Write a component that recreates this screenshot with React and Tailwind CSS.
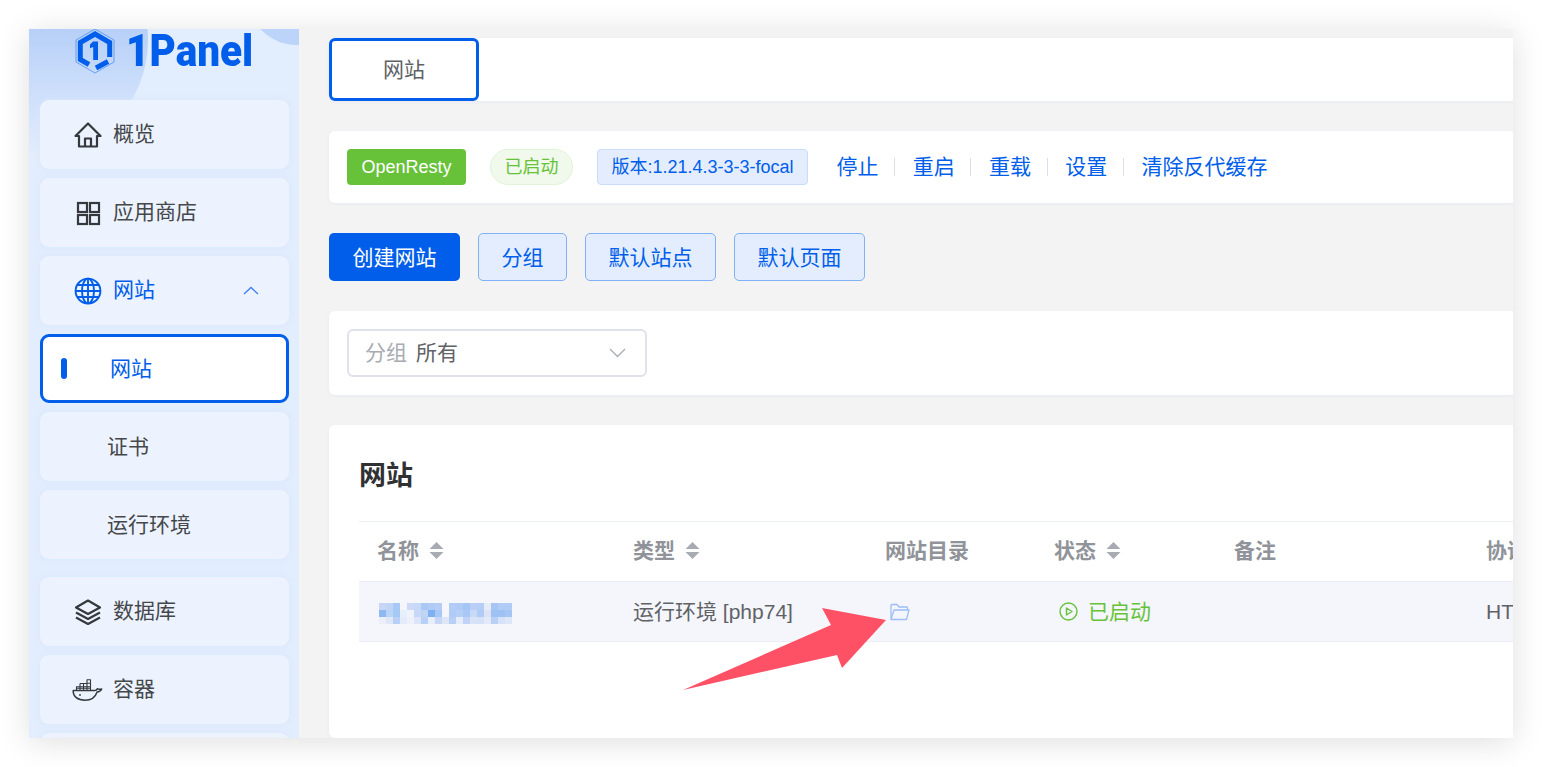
import React from 'react';

const cjk = "font-['Liberation_Sans','Noto_Sans_CJK_SC',sans-serif]";

const mosaic = [
  ['c7d6f6', 'c0d4f6', 'a8c8f6', 'f4f6fb', 'ccd9f7', 'c8d8f7', 'abc8f5', 'b0cbf6', 'b5cdf6', 'f6f7fb', 'b3ccf6', 'b0caf6', 'a5c5f5', 'b9cff6', 'b5cef6', 'e8ecf8', 'a5c5f5', 'b0cbf6', 'b0cbf6'],
  ['8fb8f3', 'b9d4f7', 'a5c8f5', 'e6f0fa', 'f0f3fa', 'c5d9f7', 'c0d5f6', '7fb0f2', 'a8c8f5', 'f4f6fb', 'b0ccf6', 'b5cef6', 'a8c8f5', 'c8d9f7', 'b0ccf6', 'dde3f5', '9fc2f4', '9fc2f4', 'a5c6f5'],
  ['eceff9', 'dde7f8', 'b9d0f6', 'e4ebf9', 'eef1f9', 'dde6f8', 'b9d0f6', 'e8eef9', 'c5d6f7', 'dde5f7', 'b9d0f6', 'e4ebf9', 'c0d3f6', 'd8e3f8', 'd5e1f8', 'e4e9f8', 'b9d0f6', 'd5e2f8', 'dde7f8'],
];

const HomeIcon = () => (
  <svg width="28" height="28" viewBox="0 0 28 28" fill="none" stroke="#35383c" strokeWidth="2.200" strokeLinejoin="round">
    <path d="M1.500 15 14 2.500 26.500 15h-3.500v10.500H5V15z" />
    <path d="M11 25.500V17.500h6v8" />
  </svg>
);

const AppsIcon = () => (
  <svg width="28" height="28" viewBox="0 0 28 28" fill="none" stroke="#35383c" strokeWidth="2.200">
    <rect x="4" y="4" width="9" height="9" />
    <rect x="16" y="4" width="9" height="9" />
    <rect x="4" y="16" width="9" height="9" />
    <rect x="16" y="16" width="9" height="9" />
  </svg>
);

const GlobeIcon = () => (
  <svg width="28" height="28" viewBox="0 0 28 28" fill="none" stroke="#005eeb" strokeWidth="1.900">
    <circle cx="14" cy="14" r="12.400" />
    <ellipse cx="14" cy="14" rx="6" ry="12.400" />
    <path d="M14 1.600v24.800M1.600 14h24.800M3.400 8h21.200M3.400 20h21.200" />
  </svg>
);

const LayersIcon = () => (
  <svg width="28" height="28" viewBox="0 0 28 28" fill="none" stroke="#35383c" strokeWidth="2.200" strokeLinejoin="round">
    <path d="M14 2.500 26 9.500l-12 6.500L2 9.500z" />
    <path d="M2 14.500l12 6.500 12-6.500" />
    <path d="M2 19.500l12 6.500 12-6.500" />
  </svg>
);

const DockerIcon = () => (
  <svg width="32" height="24" viewBox="0 0 32 24" fill="none" stroke="#35383c" strokeWidth="1.500" strokeLinejoin="round">
    <path d="M1.200 12.500h21.500c1.200 0 2.200-.6 2.600-1.800 1.500.9 2.800.8 4.400.2-1 2.200-2.600 3-4.600 3-1.800 5.200-6.200 8.300-12 8.300C5.600 22.200 1 18.600 1.200 12.500z" />
    <path d="M4.500 12V8.700h14V12M8 12V5.500M11.500 12V5.500M15 12V1.800h3.500V12M8 5.500h7M15 5.200h3.500M4.500 10.300h14" strokeWidth="1.100" />
    <circle cx="8" cy="17" r=".9" fill="#35383c" stroke="none" />
  </svg>
);

const Logo = () => (
  <svg width="46" height="46" viewBox="0 0 46 46" fill="none">
    <path d="M23 1 42 12v22L23 45 4 34V12z" stroke="#4d8ff0" strokeWidth="0.800" />
    <g stroke="#005eeb" strokeWidth="5">
      <path d="M17 36.500 8.300 31.500V14.500L23 6 37.700 14.500V29" />
      <path d="M36 33.500 24 40" />
    </g>
    <path d="M21 13.500h5v18.500h-4.800V19l-3.200 1.200v-3.800z" fill="#005eeb" />
  </svg>
);

const SortCaret = () => (
  <svg width="15" height="19" viewBox="0 0 15 19" className="ml-[10px]" fill="#a8abb2">
    <path d="M7.500 1 14.500 8H.5z" />
    <path d="M7.500 18 14.500 11H.5z" />
  </svg>
);

const Card = ({ icon, label, active, children }) => (
  <div className={`h-[69px] rounded-[9px] bg-[#ecf3fe] shadow-[0_0_6px_#d8e6fc] flex items-center ${children ? 'justify-between pr-[30px]' : ''}`}>
    <div className="flex items-center">
      <div className="w-[34px] ml-[31px] flex justify-center">{icon}</div>
      <span className={`ml-[8px] pb-[2px] text-[21px] ${active ? 'text-[#005eeb]' : 'text-[#45474b]'}`}>{label}</span>
    </div>
    {children}
  </div>
);

const SubItem = ({ label }) => (
  <div className="h-[69px] rounded-[9px] bg-[#ecf3fe] shadow-[0_0_6px_#d8e6fc] flex items-center pl-[67px] text-[21px] text-[#45474b]">
    {label}
  </div>
);

const Sidebar = () => (
  <aside className="relative w-[270px] shrink-0 overflow-hidden bg-[#e2edfd]">
    <div className="absolute -left-[117px] -top-[107px] w-[236px] h-[236px] rounded-full bg-linear-to-b from-[#b3cdf7] from-[40%] to-[#e4eefd]" />
    <div className="absolute left-[218px] -top-[84px] w-[100px] h-[100px] rounded-full bg-[#bcd4fa]" />
    <div className="relative h-[71px] flex items-start pl-[43px] -mt-[1px]">
      <Logo />
      <span className="ml-[8px] mt-[-5px] origin-left scale-x-[0.9] font-['Roboto'] font-black text-[45px] leading-[56px] text-[#005eeb]">1Panel</span>
    </div>
    <div className="relative mt-[1px] ml-[11px] w-[249px] flex flex-col gap-[9px]">
      <Card icon={<HomeIcon />} label="概览" />
      <Card icon={<AppsIcon />} label="应用商店" />
      <Card icon={<GlobeIcon />} label="网站" active>
        <svg width="16" height="9" viewBox="0 0 16 9" fill="none" stroke="#3b7ff0" strokeWidth="1.300"><path d="M1 8l7-6.500L15 8" /></svg>
      </Card>
      <div className="h-[69px] rounded-[9px] bg-white border-[3px] border-[#005eeb] flex items-center pl-[18px]">
        <span className="w-[6px] h-[21px] rounded-[3px] bg-[#005eeb]" />
        <span className="ml-[43px] text-[21px] text-[#005eeb]">网站</span>
      </div>
      <SubItem label="证书" />
      <SubItem label="运行环境" />
      <div className="h-[0px]" />
      <Card icon={<LayersIcon />} label="数据库" />
      <Card icon={<DockerIcon />} label="容器" />
      <Card label="" />
    </div>
  </aside>
);

const Tab = () => (
  <div className="h-[63px] rounded-l-[6px] bg-white shadow-[0_1px_3px_#e6e9f0]">
    <div className="w-[150px] h-[63px] rounded-[6px] border-[3px] border-[#005eeb] flex items-center justify-center text-[21px] text-[#606266]">
      网站
    </div>
  </div>
);

const links = ['停止', '重启', '重载', '设置', '清除反代缓存'];

const StatusBar = () => (
  <div className="mt-[30px] h-[72px] rounded-l-[6px] bg-white shadow-[0_1px_3px_#e6e9f0] flex items-center pl-[18px]">
    <span className="w-[119px] h-[36px] rounded-[4px] bg-[#67c23a] text-white text-[18px] flex items-center justify-center">OpenResty</span>
    <span className="ml-[24px] w-[83px] h-[36px] rounded-full bg-[#f0f9eb] border border-[#e1f3d8] text-[#67c23a] text-[18px] flex items-center justify-center">已启动</span>
    <span className="ml-[24px] w-[211px] h-[36px] rounded-[4px] bg-[#e3edfd] border border-[#c9dcfb] text-[#005eeb] text-[18px] flex items-center justify-center whitespace-nowrap">版本:1.21.4.3-3-3-focal</span>
    <div className="ml-[28.5px] flex items-center">
      {links.map((l, i) => (
        <React.Fragment key={l}>
          {i > 0 && <span className="w-px h-[18px] bg-[#dcdfe6] ml-[15.5px] mr-[17.75px]" />}
          <span className="text-[21px] text-[#005eeb]">{l}</span>
        </React.Fragment>
      ))}
    </div>
  </div>
);

const Btn = ({ label, w }) => (
  <button className={`${w} h-[48px] pt-[1px] rounded-[5px] bg-[#e3edfd] border border-[#80b0f6] text-[21px] text-[#005eeb]`}>{label}</button>
);

const Buttons = () => (
  <div className="mt-[30px] flex gap-[18px]">
    <button className="w-[131px] h-[48px] pt-[1px] rounded-[5px] bg-[#005eeb] text-[21px] text-white">创建网站</button>
    <Btn label="分组" w="w-[89px]" />
    <Btn label="默认站点" w="w-[131px]" />
    <Btn label="默认页面" w="w-[131px]" />
  </div>
);

const Filter = () => (
  <div className="mt-[30px] h-[84px] rounded-l-[6px] bg-white shadow-[0_1px_3px_#e6e9f0] flex items-center pl-[18px]">
    <div className="w-[300px] h-[48px] rounded-[6px] border-2 border-[#dfe2e8] flex items-center pl-[16px] pr-[19px] text-[21px]">
      <span className="text-[#a8abb2]">分组</span>
      <span className="ml-[9px] text-[#606266]">所有</span>
      <svg width="17" height="10" viewBox="0 0 17 10" className="ml-auto" fill="none" stroke="#a8abb2" strokeWidth="1.300"><path d="M1 1l7.500 7.500L16 1" /></svg>
    </div>
  </div>
);

const cols = 'grid grid-cols-[256px_252px_169px_180px_252px_1fr]';

const HeadCell = ({ label, sort }) => (
  <div className="pl-[18px] pb-[2px] flex items-center font-bold text-[21px] text-[#909399] whitespace-nowrap overflow-hidden">
    {label}
    {sort && <SortCaret />}
  </div>
);

const Table = () => (
  <div className="mt-[30px] flex-1 rounded-l-[6px] bg-white shadow-[0_1px_3px_#e6e9f0] pl-[30px]">
    <h2 className="h-[96px] pt-[31px] text-[27px] leading-[40px] font-bold text-[#303133]">网站</h2>
    <div className={`${cols} h-[61px] border-t border-b border-[#ebeef5]`}>
      <HeadCell label="名称" sort />
      <HeadCell label="类型" sort />
      <HeadCell label="网站目录" />
      <HeadCell label="状态" sort />
      <HeadCell label="备注" />
      <HeadCell label="协议" />
    </div>
    <div className={`${cols} h-[60px] bg-[#f4f6fb] border-b border-[#ebeef5] text-[21px] text-[#606266]`}>
      <div className="pl-[20px] flex items-center">
        <div className="mt-[3px] blur-[0.6px]">
          {mosaic.map((row, r) => (
            <div key={r} className="flex">
              {row.map((c, i) => (
                <span key={i} className="w-[7px] h-[7px]" style={{ backgroundColor: `#${c}` }} />
              ))}
            </div>
          ))}
        </div>
      </div>
      <div className="pl-[18px] flex items-center whitespace-nowrap">运行环境 [php74]</div>
      <div className="pl-[23px] flex items-center">
        <svg width="20" height="18" viewBox="0 0 20 18" fill="none" stroke="#9dbdf8" strokeWidth="1.300" strokeLinejoin="round">
          <path d="M1 15.500V2.500C1 1.900 1.400 1.500 2 1.500h5l2 2.500h7.500c.6 0 1 .4 1 1V7" />
          <path d="M1 16.500 4 7h15l-2.500 9.500z" />
        </svg>
      </div>
      <div className="pl-[23px] flex items-center text-[#67c23a]">
        <svg width="19" height="19" viewBox="0 0 19 19" fill="none" stroke="#67c23a" strokeWidth="1.400" strokeLinejoin="round">
          <circle cx="9.500" cy="9.500" r="8.500" />
          <path d="M7.500 6v7l5.500-3.500z" />
        </svg>
        <span className="ml-[10px]">已启动</span>
      </div>
      <div />
      <div className="pl-[18px] flex items-center">HTTP</div>
    </div>
  </div>
);

const App = () => (
  <div className={`relative w-[1542px] h-[767px] overflow-hidden bg-white pt-[29px] pl-[29px] ${cjk}`}>
    <div className="w-[1484px] h-[709px] overflow-hidden flex bg-[#f3f3f4] shadow-[0_4px_30px_rgba(0,0,0,0.13)]">
      <Sidebar />
      <main className="flex-1 min-w-0 pl-[30px] pt-[9px] flex flex-col">
        <Tab />
        <StatusBar />
        <Buttons />
        <Filter />
        <Table />
      </main>
    </div>
    <svg className="absolute left-0 top-0 pointer-events-none" width="1542" height="767" viewBox="0 0 1542 767">
      <path d="M683 690 831 625 822 608 886 620 842 668 837 655z" fill="#ff5166" />
    </svg>
  </div>
);

export default App;
